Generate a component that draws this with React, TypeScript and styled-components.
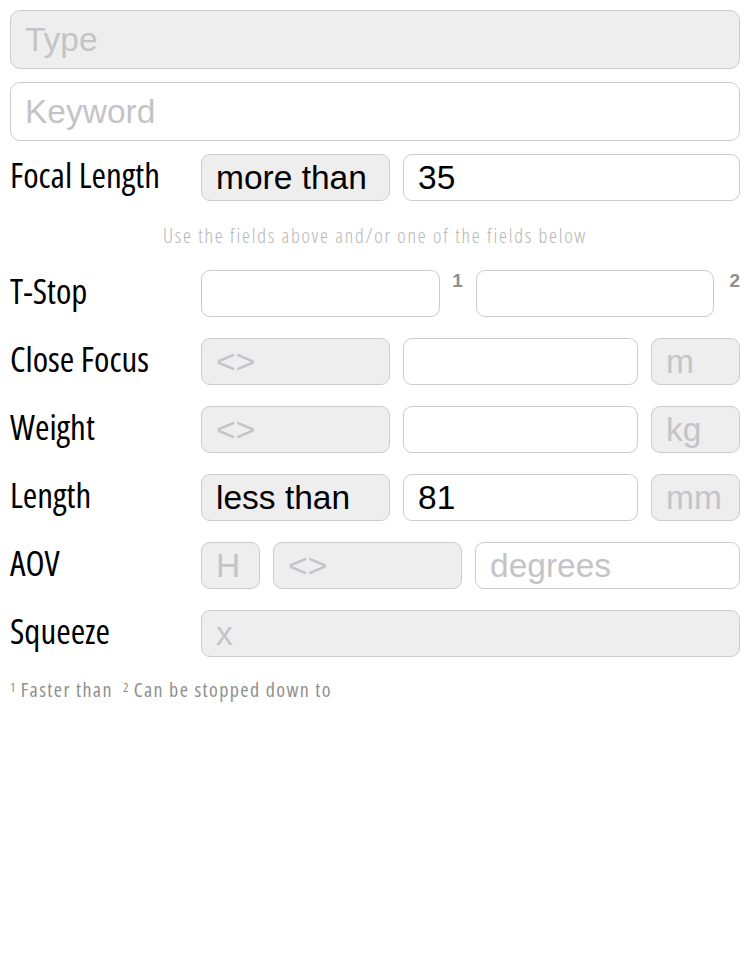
import React from "react";
import styled, { createGlobalStyle } from "styled-components";

const GlobalStyle = createGlobalStyle`
  html, body {
    margin: 0;
    padding: 0;
    background: #ffffff;
  }
  body {
    font-family: "Liberation Sans", Arial, sans-serif;
  }
`;

type Tone = "gray" | "white";

const rows = [
  { label: "Close Focus", op: "<>", value: "", unit: "m" },
  { label: "Weight", op: "<>", value: "", unit: "kg" },
  { label: "Length", op: "less than", value: "81", unit: "mm" },
];

export default function App() {
  return (
    <>
      <GlobalStyle />
      <Page>
        <Stack>
          <Field $tone="gray" $tall>
            <Placeholder>Type</Placeholder>
          </Field>
          <Field $tone="white" $tall>
            <Placeholder>Keyword</Placeholder>
          </Field>
          <Row>
            <Label>Focal Length</Label>
            <Controls>
              <Field $tone="gray" $width={189}>
                more than
              </Field>
              <Field $tone="white" $grow>
                35
              </Field>
            </Controls>
          </Row>
        </Stack>

        <Hint>Use the fields above and/or one of the fields below</Hint>

        <Rows>
          <Row>
            <Label>T-Stop</Label>
            <Controls $gap={0}>
              <Field $tone="white" $grow />
              <Note $width={36}>1</Note>
              <Field $tone="white" $grow />
              <Note $width={26} $right>
                2
              </Note>
            </Controls>
          </Row>

          {rows.map((r) => (
            <Row key={r.label}>
              <Label>{r.label}</Label>
              <Controls>
                <Field $tone="gray" $width={189}>
                  {r.op === "<>" ? <Placeholder>{r.op}</Placeholder> : r.op}
                </Field>
                <Field $tone="white" $grow>
                  {r.value}
                </Field>
                <Field $tone="gray" $width={89}>
                  <Placeholder>{r.unit}</Placeholder>
                </Field>
              </Controls>
            </Row>
          ))}

          <Row>
            <Label>AOV</Label>
            <Controls>
              <Field $tone="gray" $width={59}>
                <Placeholder>H</Placeholder>
              </Field>
              <Field $tone="gray" $width={189}>
                <Placeholder>&lt;&gt;</Placeholder>
              </Field>
              <Field $tone="white" $grow>
                <Placeholder>degrees</Placeholder>
              </Field>
            </Controls>
          </Row>

          <Row>
            <Label>Squeeze</Label>
            <Controls>
              <Field $tone="gray" $grow>
                <Placeholder>x</Placeholder>
              </Field>
            </Controls>
          </Row>
        </Rows>

        <Footnote>
          <Sup>1</Sup> Faster than &nbsp;<Sup>2</Sup> Can be stopped down to
        </Footnote>
      </Page>
    </>
  );
}

const condensed = `
  font-family: "Open Sans", "Noto Sans", sans-serif;
  font-stretch: 75%;
`;

const Page = styled.div`
  width: 730px;
  padding: 10px;
  display: flex;
  flex-direction: column;
`;

const Stack = styled.div`
  display: flex;
  flex-direction: column;
  gap: 13px;
`;

const Rows = styled.div`
  display: flex;
  flex-direction: column;
  gap: 21px;
`;

const Row = styled.div`
  display: grid;
  grid-template-columns: 191px 1fr;
  grid-template-rows: 47px;
  align-items: center;
  height: 47px;
`;

const Label = styled.div`
  ${condensed}
  height: 47px;
  line-height: 41px;
  font-size: 35px;
  font-weight: 400;
  color: #000000;
  white-space: nowrap;
`;

const Controls = styled.div<{ $gap?: number }>`
  display: flex;
  gap: ${(p) => p.$gap ?? 13}px;
  height: 47px;
`;

const Field = styled.div<{ $tone: Tone; $width?: number; $grow?: boolean; $tall?: boolean }>`
  box-sizing: border-box;
  height: ${(p) => (p.$tall ? 59 : 47)}px;
  ${(p) => (p.$width ? `width: ${p.$width}px; flex: none;` : "")}
  ${(p) => (p.$grow ? "flex: 1 1 0; min-width: 0;" : "")}
  border: 1px solid #cccccc;
  border-radius: ${(p) => (p.$tall ? 10 : 9)}px;
  background: ${(p) => (p.$tone === "gray" ? "#eeeeee" : "#ffffff")};
  display: flex;
  align-items: center;
  padding: 0 14px;
  font-size: 33.5px;
  color: #000000;
  white-space: nowrap;
  overflow: hidden;
`;

const Placeholder = styled.span`
  color: #c4c4c8;
`;

const Note = styled.div<{ $width: number; $right?: boolean }>`
  width: ${(p) => p.$width}px;
  flex: none;
  align-self: flex-start;
  text-align: ${(p) => (p.$right ? "right" : "center")};
  font-size: 19px;
  font-weight: bold;
  color: #8e8e93;
`;

const Hint = styled.div`
  height: 69px;
  display: flex;
  align-items: center;
  justify-content: center;
  ${condensed}
  font-size: 20px;
  font-weight: 300;
  letter-spacing: 1.8px;
  color: #b5b5b5;
`;

const Footnote = styled.div`
  margin-top: 19px;
  ${condensed}
  font-size: 20px;
  font-weight: 400;
  letter-spacing: 1.4px;
  color: #909090;
`;

const Sup = styled.span`
  font-size: 13px;
  vertical-align: 5px;
  letter-spacing: 0;
`;
